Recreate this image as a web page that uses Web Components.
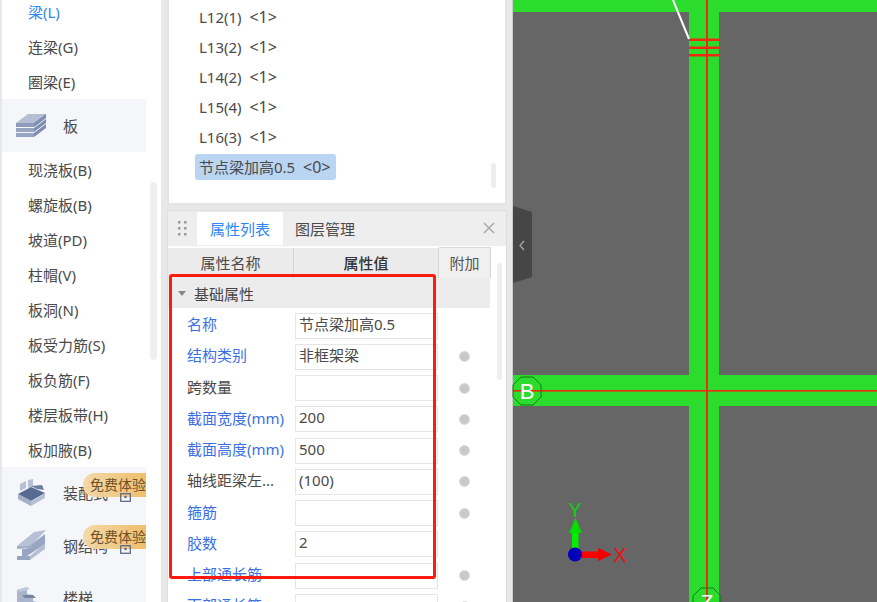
<!DOCTYPE html>
<html lang="zh"><head><meta charset="utf-8"><title>属性列表</title>
<style>
html,body{margin:0;padding:0;height:602px;overflow:hidden;background:#e8e8e8;font:15px "Noto Sans","Noto Sans CJK SC",sans-serif;color:#444}
.tag{font-size:16px}
</style></head><body>
<app-shell>
  <side-bar slot="side">
    <side-item active>梁(L)</side-item><side-item>连梁(G)</side-item><side-item>圈梁(E)</side-item>
    <side-group label="板" icon="slab"></side-group>
    <side-item>现浇板(B)</side-item><side-item>螺旋板(B)</side-item><side-item>坡道(PD)</side-item><side-item>柱帽(V)</side-item><side-item>板洞(N)</side-item><side-item>板受力筋(S)</side-item><side-item>板负筋(F)</side-item><side-item>楼层板带(H)</side-item><side-item>板加腋(B)</side-item>
    <side-group label="装配式" icon="prefab" trial></side-group>
    <side-group label="钢结构" icon="steel" trial></side-group>
    <side-group label="楼梯" icon="stair"></side-group>
  </side-bar>
  <tree-panel slot="mid">
    <tree-row>L12(1)&nbsp;&nbsp;<span class="tag">&lt;1&gt;</span></tree-row><tree-row>L13(2)&nbsp;&nbsp;<span class="tag">&lt;1&gt;</span></tree-row><tree-row>L14(2)&nbsp;&nbsp;<span class="tag">&lt;1&gt;</span></tree-row><tree-row>L15(4)&nbsp;&nbsp;<span class="tag">&lt;1&gt;</span></tree-row><tree-row>L16(3)&nbsp;&nbsp;<span class="tag">&lt;1&gt;</span></tree-row><tree-row selected>节点梁加高0.5&nbsp;&nbsp;<span class="tag">&lt;0&gt;</span></tree-row>
  </tree-panel>
  <prop-panel slot="mid">
    <prop-row blue label="名称" value="节点梁加高0.5" nodot></prop-row>
    <prop-row blue label="结构类别" value="非框架梁"></prop-row>
    <prop-row label="跨数量" value=""></prop-row>
    <prop-row blue label="截面宽度(mm)" value="200"></prop-row>
    <prop-row blue label="截面高度(mm)" value="500"></prop-row>
    <prop-row label="轴线距梁左..." value="(100)"></prop-row>
    <prop-row blue label="箍筋" value=""></prop-row>
    <prop-row blue label="胶数" value="2" nodot></prop-row>
    <prop-row blue label="上部通长筋" value=""></prop-row>
    <prop-row blue label="下部通长筋" value=""></prop-row>
  </prop-panel>
  <draw-canvas slot="canvas"></draw-canvas>
</app-shell>
<script>
const def=(name,html)=>{customElements.define(name,class extends HTMLElement{
  connectedCallback(){ if(this.shadowRoot)return; const r=this.attachShadow({mode:'open'}); r.innerHTML=typeof html==='function'?html(this):html; }
});};
def('app-shell',`<style>
:host{display:flex;width:877px;height:602px;overflow:hidden}
.side{flex:0 0 159px;margin-left:2px;background:#fff;overflow:hidden;height:602px;position:relative}
.mid{flex:0 0 340px;margin-left:6px;display:flex;flex-direction:column;gap:5px;height:602px;overflow:hidden}
.canvas{flex:0 0 365px;margin-left:5px;height:602px}
</style><div class="side"><slot name="side"></slot></div><div class="mid"><slot name="mid"></slot></div><div class="canvas"><slot name="canvas"></slot></div>`);
def('side-bar',`<style>
:host{display:block;margin-top:-6px;width:144px}
.track{position:absolute;left:148px;top:182px;width:7px;height:178px;background:#efefef;border-radius:4px}
</style><slot></slot><div class="track"></div>`);
def('side-item',h=>`<style>
:host{display:flex;align-items:center;height:35px;padding-left:26px;font-size:15px;color:${h.hasAttribute('active')?'#2f86f6':'#4a4a4a'};white-space:nowrap}
</style><slot></slot>`);
const icons={
slab:`<svg width="30" height="26" viewBox="0 0 30 26"><path d="M0 11 12 2H30V6L18 15H0Z" fill="#b4bfd4"/><path d="M0 11H18V15H0Z" fill="#8e9bbb"/><path d="M18 11 30 2V6L18 15Z" fill="#7f8db0"/><path d="M0 16H18V20H0Z" fill="#98a5c2"/><path d="M18 16 30 7V11L18 20Z" fill="#7f8db0"/><path d="M0 21H18V25H0Z" fill="#98a5c2"/><path d="M18 21 30 12V16L18 25Z" fill="#7f8db0"/></svg>`,
prefab:`<svg width="30" height="28" viewBox="0 0 30 28" style="margin-left:1px"><path d="M3 5 9 2V9L3 12ZM11 1 16 0V7L11 9Z" fill="#b7c1d5"/><path d="M1 15 14 8 28 14 14 22Z" fill="#566a92"/><path d="M1 15 14 22V27L1 20Z" fill="#a3aec7"/><path d="M28 14 14 22V27L28 19Z" fill="#b7c1d5"/><path d="M14 7 25 6 27 11 20 10Z" fill="#6b7da1"/></svg>`,
steel:`<svg width="30" height="31" viewBox="0 0 30 31" style="margin-left:1px"><path d="M0 16 17 2 29 0 15 15Z" fill="#b7c1d6"/><path d="M10 18 28 4V14L10 26Z" fill="#98a5c2"/><path d="M13 26 28 13V19L13 30Z" fill="#b3bed3"/><path d="M0 16 15 15V18L0 19Z" fill="#a3aec7"/><path d="M5 19H10V26H5Z" fill="#98a5c2"/><path d="M0 26H13V30H0Z" fill="#98a5c2"/></svg>`,
stair:`<svg width="26" height="28" viewBox="0 0 26 28" style="margin-top:4px"><path d="M1 4 11 1V8L17 9V15L24 17V28H1Z" fill="#a9b5cd"/><path d="M1 4 11 1 14 3 4 6Z" fill="#c0c9db"/><path d="M6 9 17 9 20 12 9 12ZM10 16 24 17 25 20 13 19Z" fill="#76859f"/></svg>`};
def('side-group',h=>{const label=h.getAttribute('label'),t=h.hasAttribute('trial'),ic=h.getAttribute('icon');
return `<style>
:host{display:flex;align-items:center;height:52.5px;position:relative;background:#f4f6f9;font-size:15px;color:#4a4a4a;white-space:nowrap}
.ic{flex:0 0 61px;display:flex;align-items:center;padding-left:14px;box-sizing:border-box}
.ic svg{display:block}
.lock{margin-left:12px;margin-top:7px;width:11px;height:11px;position:relative;z-index:2}
.badge{position:absolute;left:81px;top:6px;width:63px;height:24px;box-sizing:border-box;padding-left:7px;line-height:23px;font-size:14px;color:#6b4a1e;border-radius:12px 0 0 12px;background:linear-gradient(90deg,#f4d8a6,#eebd66);opacity:.96;overflow:hidden}
</style><span class="ic">${icons[ic]}</span><span>${label}</span>${t?`<svg class="lock" viewBox="0 0 11 11"><rect x=".7" y="2.7" width="9.6" height="7.6" fill="none" stroke="#5d6c88" stroke-width="1.3"/><circle cx="5.5" cy="6" r="1.3" fill="#5d6c88"/></svg><span class="badge">免费体验</span>`:''}`});
def('tree-panel',`<style>
:host{display:block;box-sizing:border-box;height:205px;background:#fff;border:2px solid #e4e4e4;border-top:0;position:relative;padding:2px 0 0 30px}
.bar{position:absolute;right:9px;top:163px;width:5px;height:25px;background:#eee;border-radius:3px}
</style><slot></slot><div class="bar"></div>`);
def('tree-row',h=>`<style>
:host{display:block;height:30px;line-height:30px;font-size:15px;color:#4a4a4a;white-space:nowrap}
span{display:inline-block;line-height:26px;height:26px;padding:0 6px 0 4px;margin-left:-4px;vertical-align:top;margin-top:2px;border-radius:3px;${h.hasAttribute('selected')?'background:#b9d5f2;':''}}
</style><span><slot></slot></span>`);
def('prop-panel',`<style>
:host{display:block;box-sizing:border-box;flex:1;background:#fff;border:1px solid #dedede;border-bottom:0;position:relative;overflow:hidden}
.tabs{display:flex;align-items:stretch;height:35px;background:#eeeeee;font-size:15px;color:#4a4a4a;margin-bottom:2px;position:relative}
.grip{flex:0 0 29px;display:flex;align-items:center;justify-content:center}
.tab{display:flex;align-items:center;justify-content:center;width:86px;margin-top:1px;margin-bottom:1px}
.tab.on{background:#fff;color:#2f86f6}
.tab.off{width:auto;margin-left:12px}
.x{position:absolute;right:11px;top:11px}
.head{display:grid;grid-template-columns:126px 145px 52px;height:30px;width:323px;background:#ebebeb;font-size:15px;color:#4a4a4a;line-height:30px;text-align:center}
.head div{border-right:1px solid #d5d5d5;box-sizing:border-box}
.head div:last-child{border-top:1px solid #dcdcdc;margin-top:-1px;height:31px;background:#f0f0f0;color:#555}
.head b{font-weight:500;color:#333}
.grp{display:flex;align-items:center;height:30px;width:322px;background:#ececec;font-size:15px;color:#444;padding-left:10px;box-sizing:border-box;margin-bottom:2px}
.tri{width:0;height:0;border:4px solid transparent;border-top:5px solid #888;border-bottom:0;margin-right:8px}
.bar{position:absolute;left:329px;top:52px;width:5px;height:117px;background:#eee;border-radius:3px}
.mark{position:absolute;left:1px;top:63px;width:267px;height:305px;box-sizing:border-box;border:3px solid #ff1a10;border-radius:3px;pointer-events:none}
</style>
<div class="tabs"><span class="grip"><svg width="9" height="16"><g fill="#999"><rect width="2.5" height="2.5"/><rect x="6" width="2.5" height="2.5"/><rect y="6" width="2.5" height="2.5"/><rect x="6" y="6" width="2.5" height="2.5"/><rect y="12" width="2.5" height="2.5"/><rect x="6" y="12" width="2.5" height="2.5"/></g></svg></span><span class="tab on">属性列表</span><span class="tab off">图层管理</span><svg class="x" width="12" height="12"><path d="M1 1 11 11M11 1 1 11" stroke="#aaa" stroke-width="1.5"/></svg></div>
<div class="head"><div>属性名称</div><div><b>属性值</b></div><div>附加</div></div>
<div class="grp"><span class="tri"></span>基础属性</div>
<slot></slot><div class="bar"></div><div class="mark"></div>`);
def('prop-row',h=>`<style>
:host{display:grid;grid-template-columns:127px 143px 52px;height:31.25px;align-items:center;width:322px;font-size:15px;color:${h.hasAttribute('blue')?'#3b6fe6':'#4a4a4a'}}
.l{padding-left:19px;white-space:nowrap;overflow:hidden;margin-bottom:4px}
.v{box-sizing:border-box;height:26px;border:1.5px solid #e6e6e6;padding-left:3px;line-height:21px;color:#4a4a4a;white-space:nowrap}
.d{justify-self:center;width:11px;height:11px;box-sizing:border-box;border-radius:50%;background:#c9c9c9;border:1px solid #dcdcdc;visibility:${h.hasAttribute('nodot')?'hidden':'visible'}}
</style><div class="l">${h.getAttribute('label')}</div><div class="v">${h.getAttribute('value')}</div><div class="d"></div>`);
def('draw-canvas',`<style>:host{display:block;width:365px;height:602px}svg{display:block}text{font-family:"Liberation Sans",sans-serif}</style>
<svg width="365" height="602" viewBox="512 0 365 602">
<rect x="512" width="365" height="602" fill="#666"/><rect x="512" width="1" height="602" fill="#ccc"/>
<g fill="#2cdc2c"><rect x="513" width="364" height="12"/><rect x="689" width="30" height="602"/><rect x="513" y="375" width="364" height="31"/></g>
<g fill="#ee2a12"><rect x="706" width="2" height="602"/><rect x="513" y="390" width="364" height="1.6"/><rect x="689" y="38.500" width="30" height="2.500"/><rect x="689" y="46.500" width="30" height="2.500"/><rect x="689" y="54" width="30" height="2.500"/></g>
<path d="M673 0 689 39" stroke="#fff" stroke-width="2"/>
<path d="M513 206 532 212V277L513 283Z" fill="#464646"/><path d="M524 241 520 245.500 524 250" fill="none" stroke="#aaa" stroke-width="1.2"/>
<path d="M521 377H533L541 385V397L533 405H521L513 397V385Z" fill="none" stroke="#127a12" stroke-width="1"/>
<text x="527" y="399" text-anchor="middle" font-size="22" fill="#fff">B</text>
<path d="M701 588H713L721 596V608H693V596Z" fill="none" stroke="#127a12"/>
<text x="707" y="609" text-anchor="middle" font-size="21" fill="#fff">Z</text>
<rect x="572" y="530" width="6.500" height="24" fill="#00f000"/><path d="M575.500 518 582 533H569Z" fill="#00e000"/>
<rect x="575" y="551.500" width="26" height="6.500" fill="#ff0000"/><path d="M612 554.500 598 548V561Z" fill="#f00000"/>
<circle cx="575" cy="554.500" r="7" fill="#0000b8"/>
<text x="575" y="517" text-anchor="middle" font-size="20" fill="#10d010">Y</text>
<text x="620" y="562" text-anchor="middle" font-size="20" fill="#f01010">X</text>
</svg>`);
</script>
</body></html>
